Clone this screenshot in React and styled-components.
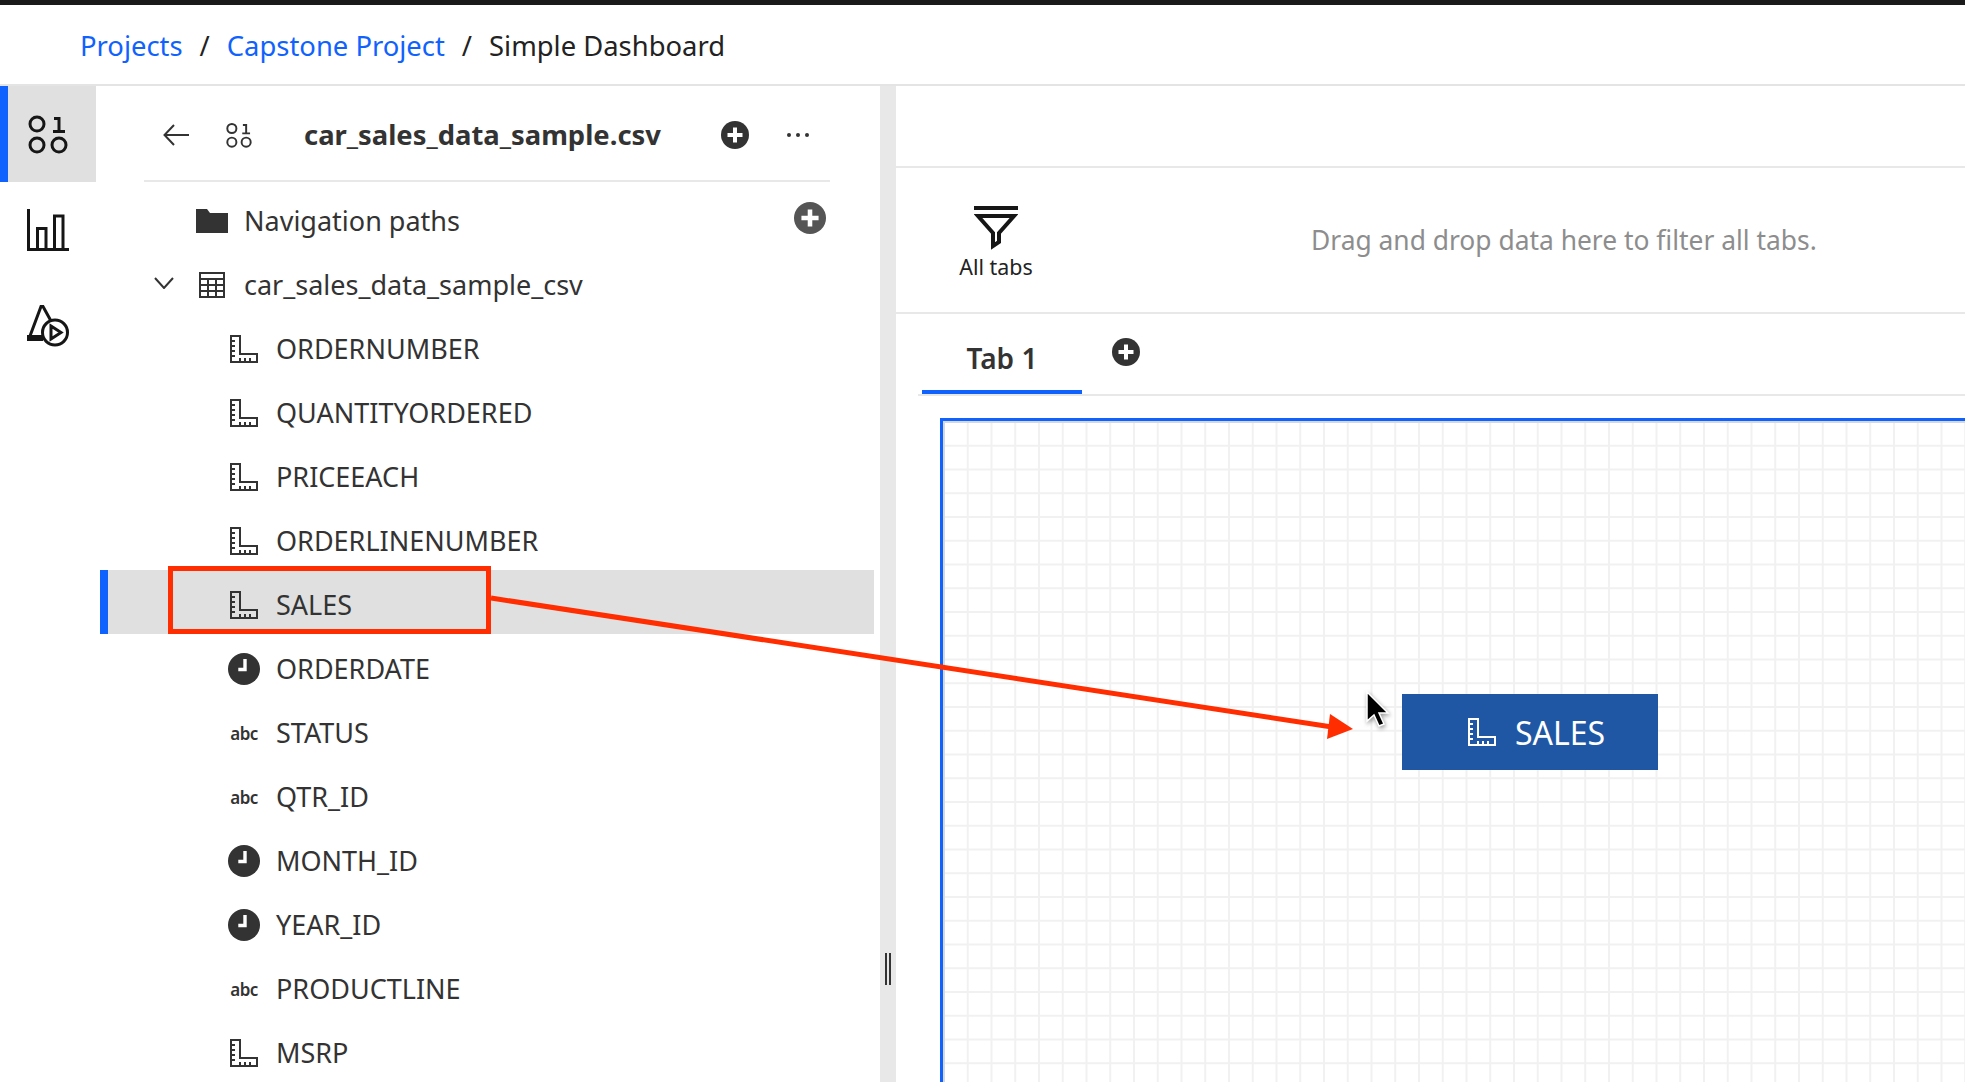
import React from 'react';
import styled, { createGlobalStyle } from 'styled-components';

const GlobalStyle = createGlobalStyle`
  html, body {
    margin: 0;
    padding: 0;
    background: #fff;
    overflow: hidden;
  }
  * {
    box-sizing: border-box;
  }
`;

const Page = styled.div`
  position: relative;
  width: 1965px;
  height: 1082px;
  overflow: hidden;
  background: #fff;
  color: #333;
  font-family: "Noto Sans", "Open Sans", sans-serif;
`;

const TopStrip = styled.div`
  height: 5px;
  background: #1a1a1a;
`;

const Breadcrumbs = styled.nav`
  display: flex;
  align-items: center;
  gap: 17px;
  height: 81px;
  padding: 2px 0 0 80px;
  border-bottom: 2px solid #e4e4e4;
  font-size: 27.4px;
`;

const Crumb = styled.span`
  color: ${(p) => (p.$current ? '#222' : '#0f62fe')};
`;

const Main = styled.div`
  display: flex;
  height: 996px;
`;

const Rail = styled.div`
  flex: 0 0 96px;
  display: flex;
  flex-direction: column;
`;

const RailItem = styled.div`
  display: flex;
  align-items: center;
  justify-content: center;
  height: 96px;
  border-left: 8px solid ${(p) => (p.$active ? '#0f62fe' : 'transparent')};
  background: ${(p) => (p.$active ? '#e0e0e0' : 'transparent')};
  padding-right: 8px;
  color: #161616;
`;

const Panel = styled.div`
  flex: 0 0 784px;
  overflow: hidden;
`;

const PanelHeader = styled.div`
  display: flex;
  align-items: center;
  width: 686px;
  height: 96px;
  margin-left: 48px;
  padding: 3px 21px 0 19px;
  border-bottom: 2px solid #e8e8e8;
`;

const BackSlot = styled.div`
  display: flex;
  width: 63px;
`;

const SmallTypeSlot = styled.div`
  display: flex;
  width: 78px;
`;

const PanelTitle = styled.div`
  flex: 1;
  font-size: 27.4px;
  font-weight: 700;
  color: #333;
`;

const Dots = styled.div`
  display: flex;
  gap: 5px;
  margin-left: 38px;
`;

const Dot = styled.i`
  display: block;
  width: 4px;
  height: 4px;
  border-radius: 50%;
  background: #333;
`;

const FieldList = styled.div`
  padding-top: 4px;
`;

const Row = styled.div`
  display: flex;
  align-items: center;
  gap: 16px;
  width: 774px;
  height: 64px;
  margin-left: 4px;
  padding: 4px 48px 0 ${(p) => p.$indent}px;
  border-left: 8px solid ${(p) => (p.$selected ? '#0f62fe' : 'transparent')};
  background: ${(p) => (p.$selected ? '#e0e0e0' : 'transparent')};
  font-size: 27px;
  color: #333;
`;

const RowAction = styled.div`
  margin-top: -4px;
`;

const Chevron = styled.svg`
  position: absolute;
  margin: -3px 0 0 -42px;
`;

const IconSlot = styled.div`
  display: flex;
  align-items: center;
  justify-content: center;
  flex: 0 0 32px;
  height: 32px;
  margin-top: 2px;
`;

const AbcIcon = styled.span`
  font-size: 17px;
  font-weight: 600;
  letter-spacing: -0.5px;
  color: #333;
`;

const RowLabel = styled.span`
  flex: 1;
`;

const Divider = styled.div`
  position: relative;
  flex: 0 0 16px;
  background: #e8e8e8;
`;

const Grip = styled.div`
  position: absolute;
  top: 867px;
  left: 5px;
  width: 6px;
  height: 32px;
  border-left: 2px solid #333;
  border-right: 2px solid #333;
`;

const Workspace = styled.div`
  flex: 1;
  display: flex;
  flex-direction: column;
  min-width: 0;
`;

const WorkspaceTop = styled.div`
  flex: 0 0 82px;
  border-bottom: 2px solid #e8e8e8;
`;

const FilterBar = styled.div`
  display: flex;
  align-items: center;
  flex: 0 0 146px;
  border-bottom: 2px solid #e8e8e8;
`;

const FilterTab = styled.div`
  display: flex;
  flex-direction: column;
  align-items: center;
  gap: 2px;
  width: 160px;
  margin-left: 20px;
  padding-top: 6px;
  font-size: 21.4px;
  color: #222;
`;

const FilterHint = styled.div`
  margin-left: 235px;
  font-size: 26.4px;
  color: #8d8d8d;
`;

const TabBar = styled.div`
  display: flex;
  flex: 0 0 82px;
  margin-left: 22px;
  border-bottom: 2px solid #e8e8e8;
`;

const Tab = styled.div`
  display: flex;
  align-items: center;
  justify-content: center;
  width: 160px;
  height: 80px;
  margin-left: 4px;
  padding-top: 11px;
  border-bottom: 4px solid #0f62fe;
  font-size: 28px;
  font-weight: 600;
  color: #333;
`;

const TabAdd = styled.div`
  margin: 24px 0 0 30px;
`;

const Canvas = styled.div`
  position: relative;
  flex: 1;
  margin: 22px -40px -40px 44px;
  border: 3px solid #0f62fe;
  border-right: 0;
  border-bottom: 0;
  box-shadow: inset 2px 2px 0 #d8d8d8;
  background-color: #fff;
  background-image:
    linear-gradient(to right, #f1f1f1 1.5px, transparent 1.5px),
    linear-gradient(to bottom, #f1f1f1 1.5px, transparent 1.5px);
  background-size: 23.75px 23.75px;
`;

const DragChip = styled.div`
  position: absolute;
  left: 459px;
  top: 273px;
  display: flex;
  align-items: center;
  gap: 19px;
  width: 256px;
  height: 76px;
  padding: 0 0 0 66px;
  background: #2057a4;
  color: #fff;
  font-size: 32px;
`;

const RedBox = styled.div`
  position: absolute;
  left: 168px;
  top: 566px;
  width: 323px;
  height: 68px;
  border: 5px solid #ff2d00;
`;

const Annotation = styled.svg`
  position: absolute;
  left: 0;
  top: 0;
  pointer-events: none;
`;

const NumberIcon = ({ size }) => (
  <svg width={size} height={size} viewBox="0 0 40 40" fill="none" stroke="currentColor" strokeWidth="3">
    <circle cx="9" cy="10" r="7" />
    <circle cx="9" cy="31" r="7" />
    <circle cx="31" cy="31" r="7" />
    <path d="M26 4.5h5V18M25 17.5h12" />
  </svg>
);

const BarsIcon = () => (
  <svg width="42" height="42" viewBox="0 0 42 42" fill="none" stroke="currentColor" strokeWidth="3">
    <path d="M1.5 0V40.5H42" />
    <path d="M10.5 40V19.5H19V40" />
    <path d="M27.500 40V7H36V40" />
  </svg>
);

const ShapesIcon = () => (
  <svg width="42" height="42" viewBox="0 0 42 42" fill="none" stroke="currentColor" strokeWidth="3">
    <path d="M3 31 14 1.500h2L24 16" />
    <path d="M0 33h16" strokeWidth="6" />
    <circle cx="28" cy="27.500" r="12.500" fill="#fff" />
    <path d="M24 21 34 27.500 24 34Z" />
  </svg>
);

const ArrowLeftIcon = () => (
  <svg width="26" height="22" viewBox="0 0 26 22" fill="none" stroke="#333" strokeWidth="2">
    <path d="M11 1 1.500 11 11 21M2 11h24" />
  </svg>
);

const PlusCircle = ({ size, color }) => (
  <svg width={size} height={size} viewBox="0 0 28 28" style={{ display: 'block' }}>
    <circle cx="14" cy="14" r="14" fill={color} />
    <path d="M14 6.500v15M6.500 14h15" stroke="#fff" strokeWidth="4" />
  </svg>
);

const FolderIcon = () => (
  <svg width="32" height="24" viewBox="0 0 32 24">
    <path d="M0 0h11l3 4h18v20H0Z" fill="#333" />
  </svg>
);

const TableIcon = () => (
  <svg width="26" height="26" viewBox="0 0 26 26" fill="none" stroke="#333" strokeWidth="2">
    <path d="M1 1h24v24H1ZM1 7h24M1 13h24M1 19h24M9 7v18M17 7v18" />
  </svg>
);

const RulerIcon = ({ color = '#333' }) => (
  <svg width="28" height="28" viewBox="0 0 28 28" fill="none" stroke={color} strokeWidth="2">
    <path d="M1 1H10V19H27V27H1Z" />
    <path d="M1 6h4M1 11h4M1 16h4M1 21h4M10 27v-4M15 27v-4M20 27v-4" />
  </svg>
);

const ClockIcon = () => (
  <svg width="32" height="32" viewBox="0 0 32 32">
    <circle cx="16" cy="16" r="16" fill="#333" />
    <path d="M15.300 6h3.400v12.300h-8.400v-3.600h5Z" fill="#fff" />
  </svg>
);

const FilterIcon = () => (
  <svg width="44" height="44" viewBox="0 0 44 44" fill="none" stroke="#161616">
    <path d="M0 2h44" strokeWidth="4" />
    <path d="M4 10h36L25 27v9l-6 4V27Z" strokeWidth="4" />
  </svg>
);

const TypeIcon = ({ type }) => {
  if (type === 'clock') return <ClockIcon />;
  if (type === 'abc') return <AbcIcon>abc</AbcIcon>;
  return <RulerIcon />;
};

const fields = [
  { name: 'ORDERNUMBER', type: 'ruler' },
  { name: 'QUANTITYORDERED', type: 'ruler' },
  { name: 'PRICEEACH', type: 'ruler' },
  { name: 'ORDERLINENUMBER', type: 'ruler' },
  { name: 'SALES', type: 'ruler', selected: true },
  { name: 'ORDERDATE', type: 'clock' },
  { name: 'STATUS', type: 'abc' },
  { name: 'QTR_ID', type: 'abc' },
  { name: 'MONTH_ID', type: 'clock' },
  { name: 'YEAR_ID', type: 'clock' },
  { name: 'PRODUCTLINE', type: 'abc' },
  { name: 'MSRP', type: 'ruler' },
];

export default function App() {
  return (
    <Page>
      <GlobalStyle />
      <TopStrip />
      <Breadcrumbs>
        <Crumb>Projects</Crumb>
        <Crumb $current>/</Crumb>
        <Crumb>Capstone Project</Crumb>
        <Crumb $current>/</Crumb>
        <Crumb $current>Simple Dashboard</Crumb>
      </Breadcrumbs>
      <Main>
        <Rail>
          <RailItem $active><NumberIcon size={40} /></RailItem>
          <RailItem><BarsIcon /></RailItem>
          <RailItem><ShapesIcon /></RailItem>
        </Rail>
        <Panel>
          <PanelHeader>
            <BackSlot><ArrowLeftIcon /></BackSlot>
            <SmallTypeSlot><NumberIcon size={26} /></SmallTypeSlot>
            <PanelTitle>car_sales_data_sample.csv</PanelTitle>
            <PlusCircle size={28} color="#333" />
            <Dots><Dot /><Dot /><Dot /></Dots>
          </PanelHeader>
          <FieldList>
            <Row $indent={88}>
              <IconSlot><FolderIcon /></IconSlot>
              <RowLabel>Navigation paths</RowLabel>
              <RowAction><PlusCircle size={32} color="#555" /></RowAction>
            </Row>
            <Row $indent={88}>
              <Chevron width="20" height="12" viewBox="0 0 20 12" fill="none" stroke="#333" strokeWidth="2">
                <path d="M1 1l9 10 9-10" />
              </Chevron>
              <IconSlot><TableIcon /></IconSlot>
              <RowLabel>car_sales_data_sample_csv</RowLabel>
            </Row>
            {fields.map((field) => (
              <Row key={field.name} $indent={120} $selected={field.selected}>
                <IconSlot><TypeIcon type={field.type} /></IconSlot>
                <RowLabel>{field.name}</RowLabel>
              </Row>
            ))}
          </FieldList>
        </Panel>
        <Divider><Grip /></Divider>
        <Workspace>
          <WorkspaceTop />
          <FilterBar>
            <FilterTab>
              <FilterIcon />
              All tabs
            </FilterTab>
            <FilterHint>Drag and drop data here to filter all tabs.</FilterHint>
          </FilterBar>
          <TabBar>
            <Tab>Tab 1</Tab>
            <TabAdd><PlusCircle size={28} color="#333" /></TabAdd>
          </TabBar>
          <Canvas>
            <DragChip>
              <RulerIcon color="#fff" />
              SALES
            </DragChip>
          </Canvas>
        </Workspace>
      </Main>
      <RedBox />
      <Annotation width="1965" height="1082" viewBox="0 0 1965 1082">
        <path d="M491 598 1332 727" stroke="#ff2d00" strokeWidth="5" fill="none" />
        <path d="M1353 729 1330 714 1327 739Z" fill="#ff2d00" />
        <path
          d="M1367 692v29l7-6 5 11 5-2-5-11h9Z"
          fill="#000"
          stroke="#fff"
          strokeWidth="1.500"
          style={{ filter: 'drop-shadow(1px 2px 2px rgba(0,0,0,0.4))' }}
        />
      </Annotation>
    </Page>
  );
}
